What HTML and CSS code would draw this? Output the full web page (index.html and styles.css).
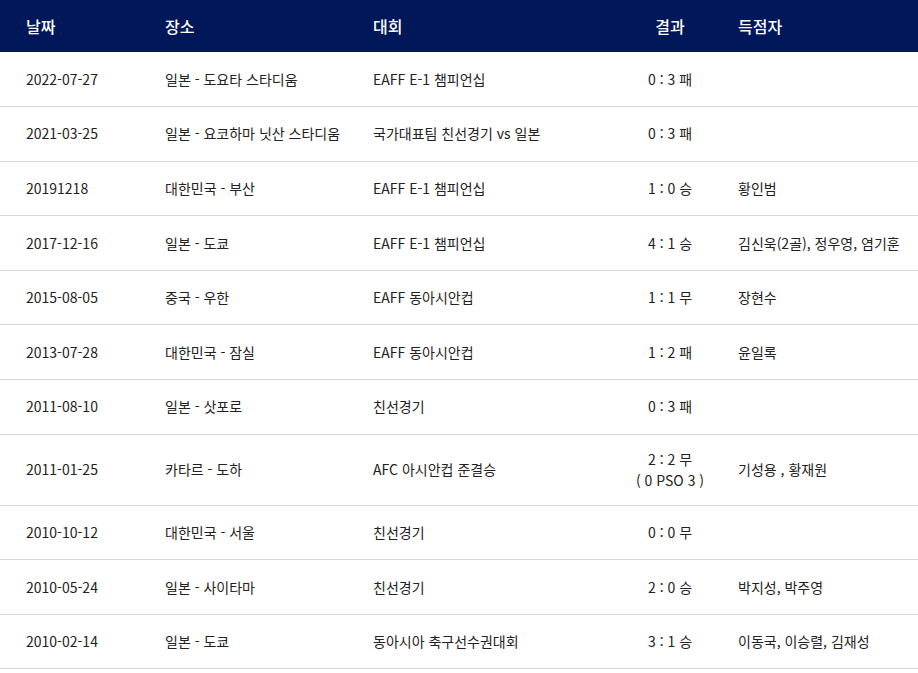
FILE: index.html
```html
<!DOCTYPE html>
<html lang="ko">
<head>
<meta charset="utf-8">
<link rel="stylesheet" href="styles.css">
</head>
<body>
<table class="results">
  <colgroup>
    <col class="c-date"><col class="c-venue"><col class="c-comp"><col class="c-res"><col class="c-scorer">
  </colgroup>
  <thead>
    <tr><th>날짜</th><th>장소</th><th>대회</th><th class="res">결과</th><th class="scorer">득점자</th></tr>
  </thead>
  <tbody>
    <tr><td>2022-07-27</td><td>일본 - 도요타 스타디움</td><td>EAFF E-1 챔피언십</td><td class="res">0 : 3 패</td><td class="scorer"></td></tr>
    <tr><td>2021-03-25</td><td>일본 - 요코하마 닛산 스타디움</td><td>국가대표팀 친선경기 vs 일본</td><td class="res">0 : 3 패</td><td class="scorer"></td></tr>
    <tr><td>20191218</td><td>대한민국 - 부산</td><td>EAFF E-1 챔피언십</td><td class="res">1 : 0 승</td><td class="scorer">황인범</td></tr>
    <tr><td>2017-12-16</td><td>일본 - 도쿄</td><td>EAFF E-1 챔피언십</td><td class="res">4 : 1 승</td><td class="scorer">김신욱(2골), 정우영, 염기훈</td></tr>
    <tr><td>2015-08-05</td><td>중국 - 우한</td><td>EAFF 동아시안컵</td><td class="res">1 : 1 무</td><td class="scorer">장현수</td></tr>
    <tr><td>2013-07-28</td><td>대한민국 - 잠실</td><td>EAFF 동아시안컵</td><td class="res">1 : 2 패</td><td class="scorer">윤일록</td></tr>
    <tr><td>2011-08-10</td><td>일본 - 삿포로</td><td>친선경기</td><td class="res">0 : 3 패</td><td class="scorer"></td></tr>
    <tr><td>2011-01-25</td><td>카타르 - 도하</td><td>AFC 아시안컵 준결승</td><td class="res">2 : 2 무<br>( 0 PSO 3 )</td><td class="scorer">기성용 , 황재원</td></tr>
    <tr><td>2010-10-12</td><td>대한민국 - 서울</td><td>친선경기</td><td class="res">0 : 0 무</td><td class="scorer"></td></tr>
    <tr><td>2010-05-24</td><td>일본 - 사이타마</td><td>친선경기</td><td class="res">2 : 0 승</td><td class="scorer">박지성, 박주영</td></tr>
    <tr><td>2010-02-14</td><td>일본 - 도쿄</td><td>동아시아 축구선수권대회</td><td class="res">3 : 1 승</td><td class="scorer">이동국, 이승렬, 김재성</td></tr>
  </tbody>
</table>
</body>
</html>
```
FILE: styles.css
```css
html, body {
  margin: 0;
  padding: 0;
  background: #ffffff;
}
body {
  font-family: "Noto Sans CJK KR", "Noto Sans", sans-serif;
  color: #222222;
}
.results {
  width: 918px;
  border-collapse: collapse;
  table-layout: fixed;
}
.c-date { width: 139px; }
.c-venue { width: 208px; }
.c-comp { width: 265px; }
.c-res { width: 116px; }
.c-scorer { width: 190px; }
.results th {
  background: #001759;
  color: #ffffff;
  font-size: 16px;
  font-weight: 500;
  text-align: left;
  height: 52px;
  padding: 0 0 0 26px;
  line-height: 20px;
  vertical-align: middle;
  box-sizing: border-box;
}
.results tbody tr {
  height: 54.6px;
}
.results td {
  font-size: 14px;
  line-height: 21px;
  padding: 14px 0 14px 26px;
  border-bottom: 1px solid #d8d8d8;
  vertical-align: middle;
  white-space: nowrap;
}
.results th.res, .results td.res {
  text-align: center;
  padding-left: 0;
}
.results th.scorer, .results td.scorer {
  padding-left: 10px;
}
```
